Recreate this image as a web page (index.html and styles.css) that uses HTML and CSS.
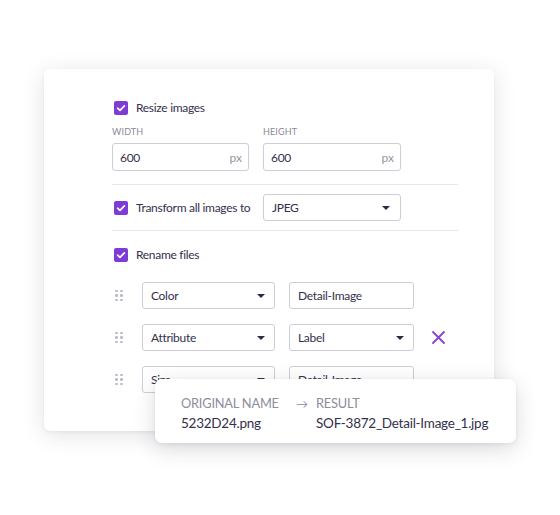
FILE: index.html
```html
<!DOCTYPE html>
<html lang="en">
<head>
<meta charset="utf-8">
<title>Image settings</title>
<link rel="stylesheet" href="styles.css">
</head>
<body>
<div class="stage">
  <div class="card">
    <div class="check-row first">
      <span class="cb"><svg viewBox="0 0 14 14" width="14" height="14"><path d="M3.6 7.2 L6 9.4 L10.4 4.8" fill="none" stroke="#fff" stroke-width="1.7" stroke-linecap="round" stroke-linejoin="round"/></svg></span>
      <span class="cb-label">Resize images</span>
    </div>
    <div class="dims">
      <div class="field">
        <div class="flabel">WIDTH</div>
        <div class="input"><span>600</span><span class="unit">px</span></div>
      </div>
      <div class="field">
        <div class="flabel">HEIGHT</div>
        <div class="input"><span>600</span><span class="unit">px</span></div>
      </div>
    </div>
    <div class="divider d1"></div>
    <div class="transform">
      <div class="check-row">
        <span class="cb"><svg viewBox="0 0 14 14" width="14" height="14"><path d="M3.6 7.2 L6 9.4 L10.4 4.8" fill="none" stroke="#fff" stroke-width="1.7" stroke-linecap="round" stroke-linejoin="round"/></svg></span>
        <span class="cb-label">Transform all images to</span>
      </div>
      <div class="select"><span>JPEG</span><span class="caret"></span></div>
    </div>
    <div class="divider d2"></div>
    <div class="check-row rename">
      <span class="cb"><svg viewBox="0 0 14 14" width="14" height="14"><path d="M3.6 7.2 L6 9.4 L10.4 4.8" fill="none" stroke="#fff" stroke-width="1.7" stroke-linecap="round" stroke-linejoin="round"/></svg></span>
      <span class="cb-label">Rename files</span>
    </div>
    <div class="rules">
      <div class="rule">
        <span class="handle"><i></i><i></i><i></i><i></i><i></i><i></i></span>
        <div class="select w-a"><span>Color</span><span class="caret"></span></div>
        <div class="input w-b"><span>Detail-Image</span></div>
      </div>
      <div class="rule">
        <span class="handle"><i></i><i></i><i></i><i></i><i></i><i></i></span>
        <div class="select w-a"><span>Attribute</span><span class="caret"></span></div>
        <div class="select w-b"><span>Label</span><span class="caret"></span></div>
        <span class="remove"><svg viewBox="0 0 13 13" width="13" height="13"><path d="M1 1 L12 12 M12 1 L1 12" stroke="#8a3fd6" stroke-width="1.8" stroke-linecap="round"/></svg></span>
      </div>
      <div class="rule">
        <span class="handle"><i></i><i></i><i></i><i></i><i></i><i></i></span>
        <div class="select w-a"><span>Size</span><span class="caret"></span></div>
        <div class="input w-b"><span>Detail-Image</span></div>
      </div>
    </div>
  </div>
  <div class="popup">
    <span class="ph">ORIGINAL NAME</span>
    <span class="ph arrow">→</span>
    <span class="ph">RESULT</span>
    <span class="pv">5232D24.png</span>
    <span></span>
    <span class="pv">SOF-3872_Detail-Image_1.jpg</span>
  </div>
</div>
</body>
</html>
```
FILE: styles.css
```css
* { box-sizing: border-box; }
html, body { margin: 0; padding: 0; background: #fff; }
body {
  font-family: "Lato", "Noto Sans", sans-serif;
  color: #35304c;
  width: 560px;
  height: 515px;
  overflow: hidden;
}
.stage {
  position: relative;
  width: 560px;
  height: 515px;
  padding: 69px 0 0 44px;
}
.card {
  width: 450px;
  height: 362px;
  background: #fff;
  border-radius: 6px;
  box-shadow: 0 4px 22px rgba(40, 36, 60, 0.13), 0 1px 3px rgba(40, 36, 60, 0.06);
  padding: 31px 36px 0 68px;
  overflow: hidden;
}
.check-row {
  display: flex;
  align-items: center;
  height: 16px;
}
.cb {
  width: 14px;
  height: 14px;
  margin-left: 2px;
  border-radius: 2px;
  background: #7e3bd6;
  display: flex;
  flex: none;
}
.cb-label {
  margin-left: 8px;
  font-size: 12px;
  letter-spacing: -0.3px;
  line-height: 16px;
  white-space: nowrap;
}
.dims, .transform {
  display: grid;
  grid-template-columns: 137px 138px;
  column-gap: 14px;
}
.dims { margin-top: 10px; }
.flabel {
  font-size: 9px;
  line-height: 12px;
  letter-spacing: 0.15px;
  color: #8b8898;
  margin-bottom: 5px;
}
.input, .select {
  height: 28px;
  border: 1px solid #cfccd8;
  border-radius: 3px;
  background: #fff;
  display: flex;
  align-items: center;
  padding: 0 6px 0 7px;
  font-size: 12px;
  letter-spacing: -0.3px;
}
.input span:first-child, .select span:first-child { flex: 1; }
.unit { color: #9693a2; font-size: 12px; letter-spacing: 0; }
.divider { height: 1px; background: #e6e4ec; }
.d1 { margin-top: 13px; }
.d2 { margin-top: 9px; }
.transform { height: 27px; margin-top: 9px; align-items: center; }
.transform .select { height: 27px; }
.rename { margin-top: 16px; }
.select { padding: 0 10px 0 8px; }
.caret {
  width: 0;
  height: 0;
  border-left: 4px solid transparent;
  border-right: 4px solid transparent;
  border-top: 4.5px solid #2f2a44;
  flex: none;
}
.rules {
  margin-top: 19px;
  display: flex;
  flex-direction: column;
  gap: 15px;
}
.rule {
  display: flex;
  align-items: center;
  height: 27px;
}
.rule .select, .rule .input { height: 27px; padding-left: 8px; }
.rule .select { padding-right: 9px; }
.w-a { width: 133px; }
.w-b { width: 125px; margin-left: 14px; }
.handle {
  width: 30px;
  padding-left: 3px;
  display: grid;
  grid-template-columns: 2.5px 2.5px;
  grid-auto-rows: 2.5px;
  column-gap: 2.5px;
  row-gap: 2.2px;
  align-content: center;
}
.handle i {
  display: block;
  background: #bdbac8;
  border-radius: 50%;
}
.remove {
  margin-left: 18px;
  display: flex;
}
.popup {
  position: absolute;
  left: 155px;
  top: 379px;
  width: 361px;
  height: 64px;
  background: #fff;
  border-radius: 7px;
  box-shadow: 0 6px 22px rgba(40, 36, 60, 0.16), 0 1px 4px rgba(40, 36, 60, 0.07);
  padding: 14px 0 0 26px;
  display: grid;
  grid-template-columns: 115px 20px auto;
  grid-auto-rows: 20px;
  align-items: center;
}
.ph { font-size: 12.8px; letter-spacing: -0.2px; color: #8f8c9c; }
.arrow { font-size: 12px; letter-spacing: 0; }
.pv { font-size: 13.5px; letter-spacing: -0.25px; color: #35304c; }
```
